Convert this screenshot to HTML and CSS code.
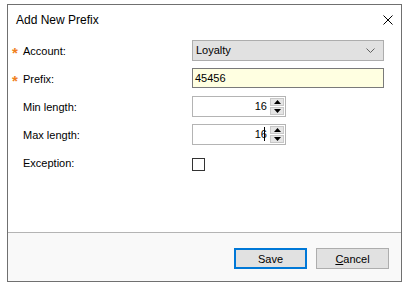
FILE: index.html
```html
<!DOCTYPE html>
<html>
<head>
<meta charset="utf-8">
<link rel="stylesheet" href="styles.css">
</head>
<body>
<div class="dialog">
  <div class="titlebar">
    <span class="title">Add New Prefix</span>
    <svg class="close" width="10" height="10" viewBox="0 0 10 10"><path d="M0.5 0.5 L9.5 9.5 M9.5 0.5 L0.5 9.5" stroke="#000" stroke-width="1" fill="none"/></svg>
  </div>
  <div class="form">
    <div class="row">
      <span class="req">*</span><span class="label">Account:</span>
      <div class="combo"><span>Loyalty</span>
        <svg class="chev" width="9" height="5" viewBox="0 0 9 5"><path d="M0.5 0.5 L4.5 4.5 L8.5 0.5" stroke="#606060" fill="none"/></svg>
      </div>
    </div>
    <div class="row">
      <span class="req">*</span><span class="label">Prefix:</span>
      <div class="text">45456</div>
    </div>
    <div class="row">
      <span class="req"></span><span class="label">Min length:</span>
      <div class="num"><span class="val">16</span>
        <div class="spin"><div class="sb"><svg width="7" height="4" viewBox="0 0 7 4"><path d="M3.5 0 L7 4 L0 4 Z" fill="#000"/></svg></div><div class="sb"><svg width="7" height="4" viewBox="0 0 7 4"><path d="M0 0 L7 0 L3.5 4 Z" fill="#000"/></svg></div></div>
      </div>
    </div>
    <div class="row">
      <span class="req"></span><span class="label">Max length:</span>
      <div class="num"><span class="val">16<i class="caret"></i></span>
        <div class="spin"><div class="sb"><svg width="7" height="4" viewBox="0 0 7 4"><path d="M3.5 0 L7 4 L0 4 Z" fill="#000"/></svg></div><div class="sb"><svg width="7" height="4" viewBox="0 0 7 4"><path d="M0 0 L7 0 L3.5 4 Z" fill="#000"/></svg></div></div>
      </div>
    </div>
    <div class="row">
      <span class="req"></span><span class="label">Exception:</span>
      <div class="check"></div>
    </div>
  </div>
  <div class="footer">
    <button class="btn primary">Save</button>
    <button class="btn"><u>C</u>ancel</button>
  </div>
</div>
</body>
</html>
```
FILE: styles.css
```css
html, body { margin: 0; padding: 0; background: #fff; }
body { font-family: "Liberation Sans", Arial, sans-serif; font-size: 11px; color: #000; }
.dialog {
  margin: 4px 0 0 7px;
  width: 395px;
  height: 278px;
  box-sizing: border-box;
  border: 1px solid #707070;
  background: #fff;
  display: flex;
  flex-direction: column;
}
.titlebar {
  height: 30px;
  display: flex;
  align-items: center;
  justify-content: space-between;
  padding: 0 8px 0 8px;
  flex: none;
}
.title { font-size: 12px; }
.form { flex: 1; display: flex; flex-direction: column; padding-top: 1px; }
.row { height: 28px; display: flex; align-items: center; }
.req { width: 15px; padding-left: 4px; padding-top: 6px; color: #f08020; font-size: 15px; line-height: 10px; height: 16px; box-sizing: border-box; font-weight: bold; }
.label { width: 169px; padding-top: 2px; }
.combo {
  width: 192px; height: 21px; box-sizing: border-box;
  border: 1px solid #adadad; background: #e1e1e1;
  display: flex; align-items: center; justify-content: space-between;
  padding: 0 8px 0 3px;
}
.text {
  width: 192px; height: 20px; box-sizing: border-box;
  border: 1px solid #7a7a7a; background: #ffffe1;
  display: flex; align-items: center; padding: 0 2px;
}
.num {
  width: 94px; height: 21px; box-sizing: border-box;
  border: 1px solid #b4b4b4; background: #fff;
  display: flex; align-items: center; justify-content: flex-end;
  padding: 0 1px 0 2px;
}
.val { position: relative; padding-right: 3px; }
.caret { position: absolute; right: 5px; top: -1px; width: 1px; height: 14px; background: #000; }
.spin { width: 14px; height: 17px; display: flex; flex-direction: column; gap: 1px; }
.sb { flex: 1; background: #e5e5e5; border: 1px solid #c8c8c8; box-sizing: border-box; display: flex; align-items: center; justify-content: center; }
.sb svg { display: block; }
.check { width: 13px; height: 13px; box-sizing: border-box; border: 1px solid #333; background: #fff; margin-top: 4px; }
.footer {
  flex: none; height: 49px; box-sizing: border-box;
  border-top: 1px solid #b4b4b4; background: #f9f9f9;
  display: flex; justify-content: flex-end; align-items: flex-start;
  padding: 15px 12px 0 0; gap: 9px;
}
.btn {
  font-family: "Liberation Sans", Arial, sans-serif; font-size: 11px;
  width: 73px; height: 21px; box-sizing: border-box;
  border: 1px solid #adadad; background: #e1e1e1; color: #000; padding: 0;
}
.btn.primary { border: 2px solid #0078d7; }
.btn u { text-decoration: underline; }
```
